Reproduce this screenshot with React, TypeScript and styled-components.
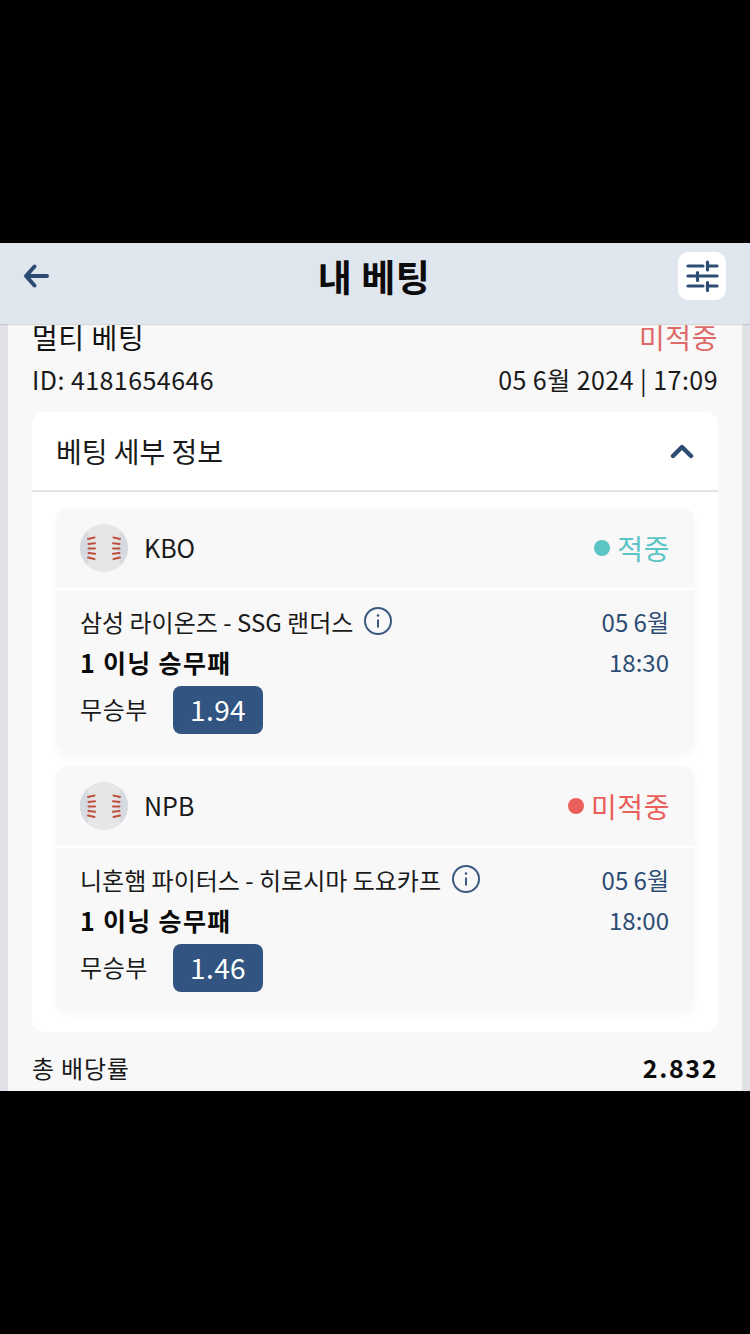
import { createGlobalStyle, styled } from "styled-components";

const GlobalStyle = createGlobalStyle`
    html, body {
        margin: 0;
        padding: 0;
        background: #000;
    }
    * {
        box-sizing: border-box;
    }
    body {
        font-family: "Noto Sans CJK KR", "Noto Sans", sans-serif;
        color: #111;
    }
`;

const NAVY = "#2c4c74";

const Screen = styled.div`
    width: 750px;
    height: 1334px;
    background: #000;
    padding-top: 243px;
`;

const Phone = styled.div`
    height: 848px;
    display: flex;
    flex-direction: column;
    overflow: hidden;
    background: #e0e2e8;
`;

const Header = styled.header`
    position: relative;
    z-index: 2;
    flex: none;
    height: 81px;
    display: grid;
    grid-template-columns: 1fr auto 1fr;
    align-items: start;
    background: #e0e6ed;
    box-shadow: 0 1px 1px rgba(0, 0, 0, 0.12);
    padding: 9px 24px 0 22px;
`;

const BackButton = styled.div`
    height: 48px;
    display: flex;
    align-items: center;
`;

const Title = styled.h1`
    margin: 0;
    font-size: 37px;
    line-height: 48px;
    font-weight: 700;
    letter-spacing: 0.5px;
    color: #0c0c0c;
`;

const FilterButton = styled.div`
    justify-self: end;
    width: 48px;
    height: 48px;
    border-radius: 10px;
    background: #fff;
    display: flex;
    align-items: center;
    justify-content: center;
`;

const Panel = styled.main`
    flex: 1;
    margin: 0 8px;
    padding: 0 24px;
    background: #f8f8f8;
`;

const TopRow = styled.div`
    display: flex;
    justify-content: space-between;
    align-items: center;
    height: 34px;
    margin-top: -4px;
    font-size: 28px;
    line-height: 34px;
    letter-spacing: 0.6px;
`;

const Missed = styled.span`
    color: #e06a6a;
`;

const MetaRow = styled.div`
    display: flex;
    justify-content: space-between;
    align-items: center;
    height: 36px;
    margin-top: 7px;
    font-size: 25px;
    letter-spacing: 0.45px;
    color: #1a1a1a;
`;

const DetailCard = styled.section`
    margin-top: 15px;
    background: #fff;
    border-radius: 12px;
    height: 620px;
`;

const DetailHeader = styled.div`
    height: 80px;
    display: flex;
    justify-content: space-between;
    align-items: center;
    padding: 0 24px 0 24px;
    border-bottom: 2px solid #e4e4e4;
    font-size: 28px;
    color: #1a1a1a;
`;

const BetList = styled.div`
    display: flex;
    flex-direction: column;
    gap: 14px;
    padding: 16px 24px 0;
`;

const BetCard = styled.article`
    height: 244px;
    border-radius: 12px;
    background: #f8f8f8;
    box-shadow: 0 4px 10px rgba(0, 0, 0, 0.04);
`;

const BetHeader = styled.div`
    height: 82px;
    display: flex;
    align-items: center;
    gap: 16px;
    padding: 0 25px 0 24px;
    border-bottom: 2px solid #fff;
`;

const League = styled.span`
    flex: 1;
    font-size: 25px;
    line-height: 32px;
    padding-bottom: 2px;
    color: #1a1a1a;
`;

const Status = styled.span<{ $color: string }>`
    display: flex;
    align-items: center;
    gap: 7px;
    font-size: 28px;
    letter-spacing: 0.6px;
    margin-right: -1px;
    color: ${p => p.$color};
`;

const Dot = styled.i<{ $color: string }>`
    width: 16px;
    height: 16px;
    border-radius: 50%;
    background: ${p => p.$color};
`;

const BetBody = styled.div`
    display: grid;
    grid-template-columns: 1fr auto;
    grid-template-rows: 40px 41px 52px;
    padding: 11px 25px 0 24px;
    align-items: center;
`;

const Teams = styled.div`
    display: flex;
    align-items: center;
    gap: 11px;
    font-size: 24px;
    color: #1a1a1a;
`;

const DateText = styled.div`
    justify-self: end;
    font-size: 24px;
    color: ${NAVY};
`;

const Market = styled.div`
    font-size: 25px;
    font-weight: 700;
    letter-spacing: 1.3px;
    color: #0a0a0a;
`;

const PickRow = styled.div`
    grid-column: 1 / 3;
    align-self: end;
    display: flex;
    align-items: center;
    gap: 25px;
    font-size: 24px;
    letter-spacing: 0.6px;
    color: #1a1a1a;
`;

const PickLabel = styled.span`
    line-height: 32px;
    padding-bottom: 3px;
`;

const Odds = styled.div`
    width: 90px;
    height: 48px;
    border-radius: 8px;
    background: #315580;
    color: #fff;
    font-size: 28px;
    letter-spacing: 0.4px;
    padding-bottom: 2px;
    display: flex;
    align-items: center;
    justify-content: center;
`;

const TotalRow = styled.div`
    display: flex;
    justify-content: space-between;
    align-items: center;
    height: 36px;
    margin-top: 17px;
    font-size: 24px;
    letter-spacing: 0.8px;
    color: #1a1a1a;
`;

const TotalValue = styled.span`
    font-size: 25px;
    font-weight: 700;
    letter-spacing: 1.6px;
    color: #0a0a0a;
`;

const BackIcon = () => (
    <svg width="28" height="28" viewBox="0 0 28 28" fill="none" stroke={NAVY} strokeWidth="4" strokeLinecap="round" strokeLinejoin="round">
        <path d="M25 14H4M12.5 4.500L4 14l8.500 9.500" />
    </svg>
);

const SlidersIcon = () => (
    <svg width="34" height="34" viewBox="0 0 34 34" fill="none" stroke={NAVY} strokeWidth="3.2" strokeLinecap="round">
        <path d="M3 7h15M23 7h9M22.500 3v8" />
        <path d="M3 17h7M15 17h17M12.500 13.500v8" />
        <path d="M3 27h15M23 27h9M22.500 23.500v8" />
    </svg>
);

const ChevronUp = () => (
    <svg width="24" height="16" viewBox="0 0 24 16" fill="none" stroke={NAVY} strokeWidth="4.4" strokeLinecap="round" strokeLinejoin="round">
        <path d="M3 13l9-9 9 9" />
    </svg>
);

const InfoIcon = () => (
    <svg width="28" height="28" viewBox="0 0 28 28" fill="none" stroke="#3a5a80">
        <circle cx="14" cy="14" r="13" strokeWidth="2" />
        <path d="M14 12.500v8" strokeWidth="2" />
        <circle cx="14" cy="8.500" r="1.300" fill="#3a5a80" stroke="none" />
    </svg>
);

const BaseballIcon = () => (
    <svg width="48" height="48" viewBox="0 0 48 48" fill="none">
        <circle cx="24" cy="24" r="24" fill="#e6e6e6" />
        <path d="M7 7C2.500 11.500 0 17.500 0 24s2.500 12.500 7 17c2-5 3.500-11 3.500-17S9 12 7 7z" fill="#d6dbe2" />
        <path d="M41 7c4.500 4.500 7 10.500 7 17s-2.500 12.500-7 17c-2-5-3.500-11-3.500-17S39 12 41 7z" fill="#d6dbe2" />
        <g stroke="#bf4f3c" strokeWidth="2" strokeLinecap="round">
            <path d="M8 15l6.500-1.500M8.500 20l6.500-.8M8.500 24.500h6.500M8.500 29l6.500.8M8 33.500l6.500 1.500" />
            <path d="M40 15l-6.500-1.500M39.500 20l-6.500-.8M39.500 24.500H33M39.500 29l-6.500.8M40 33.500l-6.500 1.500" />
        </g>
    </svg>
);

interface BetProps {
    league: string;
    hit: boolean;
    teams: string;
    date: string;
    time: string;
    odds: string;
}

const Bet = ({ league, hit, teams, date, time, odds }: BetProps) => {
    const color = hit ? "#5bc4c4" : "#ea5f5a";
    return (
        <BetCard>
            <BetHeader>
                <BaseballIcon />
                <League>{league}</League>
                <Status $color={color}>
                    <Dot $color={color} />
                    {hit ? "적중" : "미적중"}
                </Status>
            </BetHeader>
            <BetBody>
                <Teams>
                    {teams}
                    <InfoIcon />
                </Teams>
                <DateText>{date}</DateText>
                <Market>1 이닝 승무패</Market>
                <DateText>{time}</DateText>
                <PickRow>
                    <PickLabel>무승부</PickLabel>
                    <Odds>{odds}</Odds>
                </PickRow>
            </BetBody>
        </BetCard>
    );
};

export default function App() {
    return (
        <Screen>
            <GlobalStyle />
            <Phone>
                <Header>
                    <BackButton>
                        <BackIcon />
                    </BackButton>
                    <Title>내 베팅</Title>
                    <FilterButton>
                        <SlidersIcon />
                    </FilterButton>
                </Header>
                <Panel>
                    <TopRow>
                        <span>멀티 베팅</span>
                        <Missed>미적중</Missed>
                    </TopRow>
                    <MetaRow>
                        <span>ID: 4181654646</span>
                        <span>05 6월 2024 | 17:09</span>
                    </MetaRow>
                    <DetailCard>
                        <DetailHeader>
                            베팅 세부 정보
                            <ChevronUp />
                        </DetailHeader>
                        <BetList>
                            <Bet league="KBO" hit teams="삼성 라이온즈 - SSG 랜더스" date="05 6월" time="18:30" odds="1.94" />
                            <Bet league="NPB" hit={false} teams="니혼햄 파이터스 - 히로시마 도요카프" date="05 6월" time="18:00" odds="1.46" />
                        </BetList>
                    </DetailCard>
                    <TotalRow>
                        <span>총 배당률</span>
                        <TotalValue>2.832</TotalValue>
                    </TotalRow>
                </Panel>
            </Phone>
        </Screen>
    );
}
